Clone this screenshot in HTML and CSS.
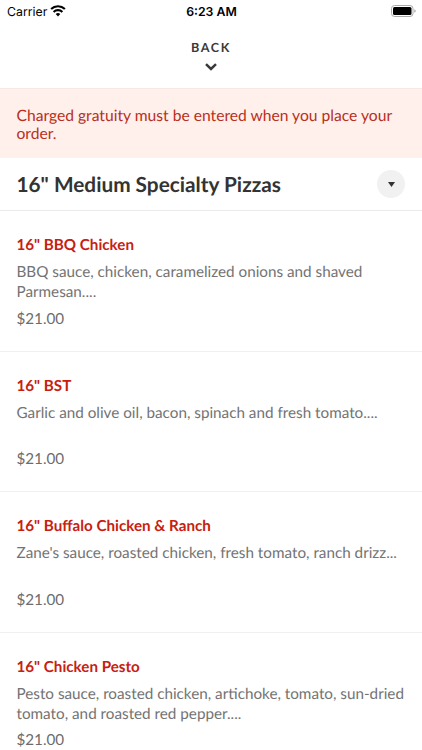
FILE: index.html
```html
<!DOCTYPE html>
<html lang="en">
<head>
<meta charset="utf-8">
<title>Menu</title>
<link rel="stylesheet" href="styles.css">
</head>
<body>
<div class="screen">
<header class="status">
<div class="carrier"><span>Carrier</span><svg class="wifi" width="16" height="12" viewBox="0 0 16 12"><path d="M8 11.6 5.7 9.1a3.3 3.3 0 0 1 4.6 0Z"/><path class="arc" d="M3.6 6.9a6.3 6.3 0 0 1 8.8 0M1.1 4.1a9.9 9.9 0 0 1 13.8 0"/></svg></div>
<div class="time">6:23 AM</div>
<svg class="battery" width="25" height="12" viewBox="0 0 25 12"><rect class="shell" x=".5" y=".5" width="21.5" height="11" rx="3"/><rect x="2" y="2" width="18.5" height="8" rx="1.5"/><path class="cap" d="M23.5 4.2v3.6c1.4-.6 1.4-3 0-3.6Z"/></svg>
</header>
<nav class="back"><span>BACK</span><svg width="12" height="8" viewBox="0 0 12 8"><path d="m1 1.2 5 4.8 5-4.8"/></svg></nav>
<p class="notice">Charged gratuity must be entered when you place your order.</p>
<div class="category"><h1>16" Medium Specialty Pizzas</h1><button class="toggle" aria-label="Choose category"><svg width="7" height="5" viewBox="0 0 7 5"><path d="M0 0h7L3.5 5Z"/></svg></button></div>
<main>
<article class="item"><h2>16" BBQ Chicken</h2><p class="desc">BBQ sauce, chicken, caramelized onions and shaved Parmesan....</p><p class="price">$21.00</p></article>
<article class="item"><h2>16" BST</h2><p class="desc">Garlic and olive oil, bacon, spinach and fresh tomato....</p><p class="price">$21.00</p></article>
<article class="item"><h2>16" Buffalo Chicken &amp; Ranch</h2><p class="desc">Zane's sauce, roasted chicken, fresh tomato, ranch drizz...</p><p class="price">$21.00</p></article>
<article class="item"><h2>16" Chicken Pesto</h2><p class="desc">Pesto sauce, roasted chicken, artichoke, tomato, sun-dried tomato, and roasted red pepper....</p><p class="price">$21.00</p></article>
</main>
</div>
</body>
</html>
```
FILE: styles.css
```css
* { box-sizing: border-box; margin: 0; padding: 0; }
body { background: #fff; font-family: Lato, sans-serif; overflow: hidden; text-rendering: geometricPrecision; }
.screen { width: 422px; height: 750px; overflow: hidden; }
.status { height: 22px; display: grid; grid-template-columns: 1fr auto 1fr; align-items: center; padding: 1px 6px 0 7px; font: 12.3px/21px Inter, sans-serif; color: #000; }
.carrier { display: flex; align-items: center; gap: 3px; }
.wifi { margin-top: -2px; }
.arc { fill: none; stroke: #000; stroke-width: 2.1; }
.time { font-weight: 600; }
.battery { justify-self: end; margin-top: -2px; }
.shell { fill: none; stroke: #aaa; }
.cap { fill: #888; }
.back { height: 66px; display: flex; flex-direction: column; align-items: center; padding-top: 17px; color: #3c3839; font-size: 12.6px; line-height: 17px; font-weight: 700; letter-spacing: 1.6px; }
.back svg { margin-top: 7px; margin-right: 1px; fill: none; stroke: #3c3839; stroke-width: 2.5; }
.notice { height: 70px; padding: 18px 16px 0 16.5px; border-top: 1px solid #f6e9e5; background: #fff0eb; color: #b82e20; font-size: 15.65px; line-height: 18px; }
.category { height: 53px; padding: 0 17px 0 16.5px; display: flex; align-items: center; justify-content: space-between; border-bottom: 1px solid #ebebeb; }
h1 { padding-top: 2px; font-size: 20.8px; line-height: 28px; font-weight: 700; color: #333; }
.toggle { width: 28px; height: 28px; display: grid; place-items: center; border: 0; border-radius: 50%; background: #f1f1f1; }
.toggle svg { fill: #333; }
.item { height: 140.6px; padding: 24px 15px 0 16.5px; border-bottom: 1px solid #f0f0f0; }
h2 { font-size: 15.2px; line-height: 21px; font-weight: 700; color: #c8200f; }
.desc { height: 42px; margin-top: 6px; font-size: 15.25px; line-height: 20.4px; color: #737373; }
.price { margin-top: 4.5px; font-size: 15.2px; line-height: 21px; color: #6c6c6c; }
```
